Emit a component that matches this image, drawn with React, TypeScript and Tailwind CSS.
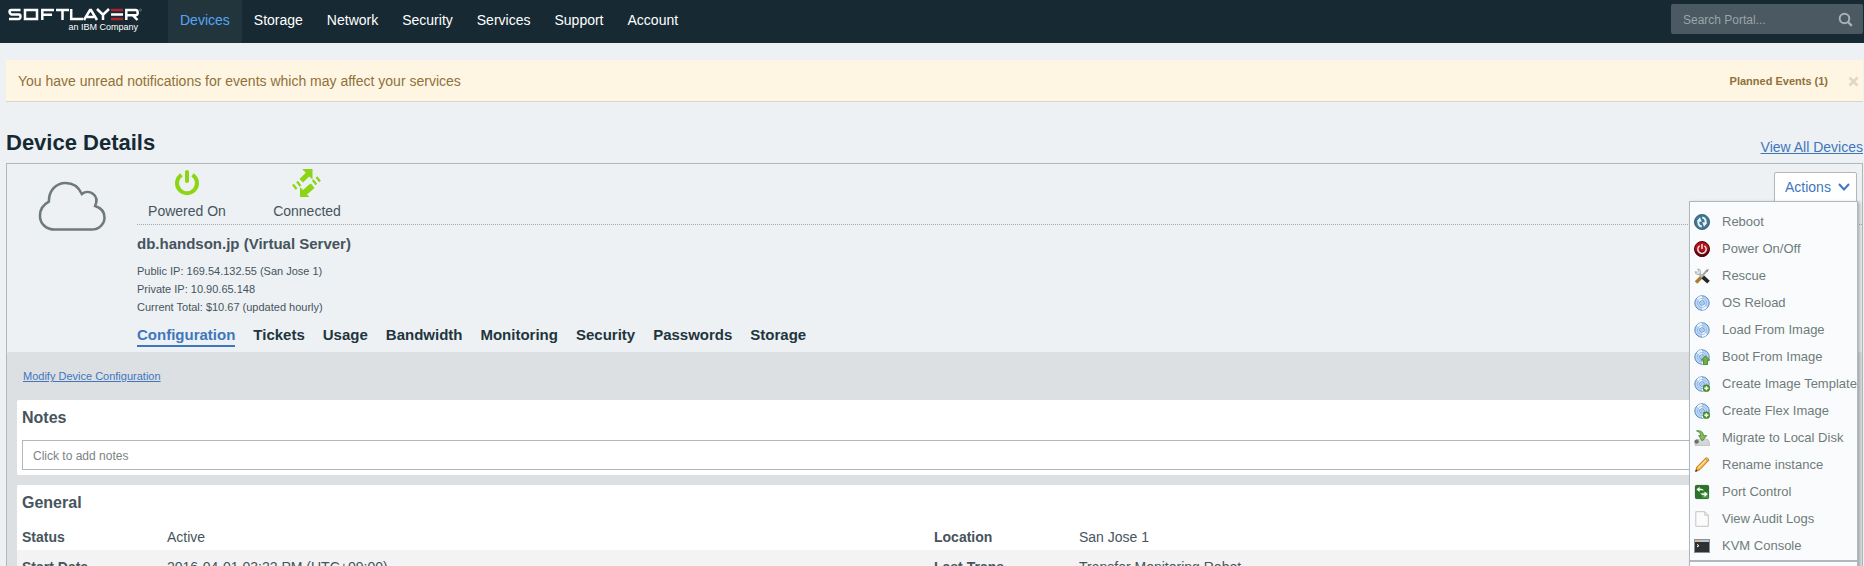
import React from "react";

const disc = (
  <>
    <circle cx="8" cy="8" r="7.2" fill="#b9d6f7" stroke="#5a88bd" />
    <path d="M8 8 2.600 3.400A7 7 0 0 1 8 1z M8 8l5.400 4.600A7 7 0 0 1 8 15z" fill="#eef6ff" />
    <circle cx="8" cy="8" r="4.600" fill="none" stroke="#8db4e2" strokeWidth=".7" />
    <circle cx="8" cy="8" r="2.200" fill="#fff" stroke="#5a8fd0" />
    <circle cx="8" cy="8" r=".8" fill="#4d7fc0" />
  </>
);
const plus = (
  <>
    <circle cx="12.400" cy="12.200" r="3.400" fill="#4e9a2e" stroke="#2f6e18" strokeWidth=".6" />
    <path d="M12.400 10.200v4M10.400 12.200h4" stroke="#fff" strokeWidth="1.400" />
  </>
);

const actions: { label: string; icon: React.ReactNode }[] = [
  {
    label: "Reboot",
    icon: (
      <>
        <circle cx="8" cy="8" r="7.600" fill="#3f7493" stroke="#2b566f" strokeWidth=".8" />
        <path d="M7.800 12.400C4.400 12 3.600 8.600 5 6.400M8.200 3.600c3.400.4 4.200 3.800 2.800 6" fill="none" stroke="#e8f2f7" strokeWidth="2" />
        <path d="M2.600 7.200 6 3.200l1.800 4.600zM13.400 8.800 10 12.800 8.200 8.200z" fill="#e8f2f7" />
      </>
    ),
  },
  {
    label: "Power On/Off",
    icon: (
      <>
        <circle cx="8" cy="8" r="7.500" fill="#b3111c" stroke="#4b0509" />
        <path d="M1 9a7 7 0 0 0 14 0q-7 3-14 0z" fill="#5d060b" />
        <path d="M5.600 4.800a4.200 4.200 0 1 0 4.800 0M8 3v5" fill="none" stroke="#f6dfe0" strokeWidth="1.500" />
      </>
    ),
  },
  {
    label: "Rescue",
    icon: (
      <>
        <path d="m2 14.500 6-6" stroke="#a87b25" strokeWidth="3.400" />
        <path d="m8 8 5-5.500" stroke="#a3a8ab" strokeWidth="2" />
        <path d="m15 .8-3.600 1.400 2 2z" fill="#8c9195" />
        <path d="m4.500 5 4 4" stroke="#b2b7ba" strokeWidth="2.600" />
        <path d="M1.200 3.500a2.800 2.800 0 1 0 2.300-2.500l1.200 1.900L3.300 4.300z" fill="#e2e5e7" stroke="#9a9fa2" strokeWidth=".7" />
        <path d="m8.800 9 5.700 5.200" stroke="#262626" strokeWidth="3.800" />
      </>
    ),
  },
  { label: "OS Reload", icon: disc },
  { label: "Load From Image", icon: disc },
  {
    label: "Boot From Image",
    icon: (
      <>
        {disc}
        <path d="m11.500 6.800 4.300 4.400h-2.200v4.300H9.500v-4.300H7.200z" fill="#6fb04c" stroke="#3f7d23" strokeWidth=".8" />
      </>
    ),
  },
  { label: "Create Image Template", icon: <>{disc}{plus}</> },
  { label: "Create Flex Image", icon: <>{disc}{plus}</> },
  {
    label: "Migrate to Local Disk",
    icon: (
      <>
        <path d="m2.500 9.500 11-.5 2.300 3.500v3H1v-3z" fill="#d3d5d6" stroke="#b0b3b5" strokeWidth=".6" />
        <circle cx="2.600" cy="11.600" r="2.200" fill="#6b7074" />
        <path d="M2.500.8c4-.6 6.800 1 7 4.800h3.200L8.300 11 4.600 5.600h2.200c0-2-1.600-3.600-4.300-4.800z" fill="#86bb5c" stroke="#477f2a" strokeWidth=".8" />
      </>
    ),
  },
  {
    label: "Rename instance",
    icon: (
      <>
        <path d="m1.500 14.500 1.300-4.500L11.500 1.300q1.800-.8 3.200 2L6 12.600z" fill="#f5b740" stroke="#b56e14" strokeWidth=".9" />
        <path d="m4.500 10.800 7.500-7.700" stroke="#fde7a4" strokeWidth="1.200" />
        <path d="m11.200 1.600 1.200-.9q2.400.2 2.500 2.600l-1 1z" fill="#eeb3a0" stroke="#b56e14" strokeWidth=".6" />
        <path d="m1.300 14.800.8-2.600 1.600 1.800z" fill="#493318" />
      </>
    ),
  },
  {
    label: "Port Control",
    icon: (
      <>
        <rect x="1.400" y="1.400" width="13.200" height="13.200" rx="1" fill="#287527" stroke="#174f18" strokeWidth=".8" />
        <path d="M8 8h6v6H8z" fill="#4a9b3c" />
        <path d="M2.400 5.400 5.600 2.700v1.800q3.400 0 4.400 2-2-.6-4.400-.2v1.800zM13.700 10.300 10.500 13v-1.800q-3.400 0-4.500-2 2.100.6 4.500.2V7.600z" fill="#fff" />
      </>
    ),
  },
  {
    label: "View Audit Logs",
    icon: <path d="M1.800.7h9l3.500 3.500v11.100H1.800zM10.800.7v3.500h3.500" fill="#fbfbfb" stroke="#c4c4c4" />,
  },
  {
    label: "KVM Console",
    icon: (
      <>
        <rect x=".5" y="1.500" width="15" height="13" fill="#2e3134" stroke="#8c9093" />
        <path d="M1 2h14v2H1z" fill="#b7c6d6" />
        <path d="M2 2.500h4v1H2z" fill="#efb43c" />
        <path d="m3 6.500 2 1.200-2 1.200" fill="none" stroke="#fff" />
      </>
    ),
  },
];

const nav = ["Devices", "Storage", "Network", "Security", "Services", "Support", "Account"];
const tabs = ["Configuration", "Tickets", "Usage", "Bandwidth", "Monitoring", "Security", "Passwords", "Storage"];
const rows = [
  ["Status", "Active", "Location", "San Jose 1"],
  ["Start Date", "2016-04-01 03:22 PM (UTC+09:00)", "Last Trans", "Transfer Monitoring Robot"],
];

function Logo() {
  return (
    <svg className="h-[13px] w-[134px]" viewBox="0 0 134 13" role="img" aria-label="SoftLayer" fill="none" stroke="#fff" strokeWidth="2.500">
      <path d="M12.500 2H3.200Q1.500 2 1.500 3.800T3.200 6.400H11Q12.500 6.400 12.500 8.500T11 11H1M17 2h12v9H17zM34.300 12V2H46M34.300 6.800H44M48 2h13M54.500 2v10M63.200 1v10H75M76 12l6-10h1l6 10M79 9h7M89 1l6 5.700L101 1M95 6.500V12" />
      <path d="M103 2h12M103 11h12" stroke="#b0232a" />
      <path d="M103 6.500h12" />
      <path d="M118.300 12V2h9.200q2.200 0 2.200 2.700t-2.200 2.600h-9M125 7.300l4.500 4.700" />
      <circle cx="132.500" cy="2" r="1" stroke="#87939a" strokeWidth=".6" />
    </svg>
  );
}

function Header() {
  return (
    <header className="flex h-[43px] justify-between bg-[#172a34] pr-px">
      <div className="flex">
        <a href="#home" className="flex w-[168px] flex-col gap-px pl-2 pt-2 text-white">
          <Logo />
          <span className="w-[130px] text-right text-[9px] leading-[10px]">an IBM Company</span>
        </a>
        <nav className="flex text-sm leading-10 text-white">
          {nav.map((n, i) => (
            <a key={n} href={`#${n}`} className={i === 0 ? "bg-[#22353d] px-3 text-[#56a5f5]" : "px-3"}>
              {n}
            </a>
          ))}
        </nav>
      </div>
      <form className="mt-1 flex h-[30px] w-48 items-center rounded-xs bg-[#4a5962] pr-2.5 pl-3">
        <input aria-label="Search Portal" placeholder="Search Portal..." className="min-w-0 grow pt-0.5 text-xs text-white outline-none placeholder:text-[#9ba4a9]" />
        <button type="button" aria-label="Search">
          <svg className="size-[15px]" viewBox="0 0 15 15" fill="none" stroke="#a9b1b5" strokeWidth="2">
            <circle cx="6.500" cy="6.500" r="4.800" />
            <path d="m10 10 3.800 3.800" strokeWidth="2.400" />
          </svg>
        </button>
      </form>
    </header>
  );
}

function ActionsMenu() {
  return (
    <div className="absolute top-2 right-[5px]">
      <button type="button" className="flex h-[30px] w-[83px] items-center justify-between rounded-t-xs border border-[#b1b8bd] bg-white pr-1.5 pl-2.5 text-sm text-[#3f76bd]">
        Actions
        <svg className="h-2 w-3" viewBox="0 0 12 8" fill="none" stroke="#3f76bd" strokeWidth="2">
          <path d="m1 1 5 5.500L11 1" />
        </svg>
      </button>
      <ul className="absolute top-[29px] -right-px w-[169px] border border-[#b1b8bd] bg-[#fafbfc] pt-1.5 shadow-[2px_1px_3px_rgba(0,0,0,0.25)]">
        {actions.map((a) => (
          <li key={a.label}>
            <button type="button" className="flex h-[27px] w-full items-center gap-3 pl-1 text-left text-[13px] whitespace-nowrap text-[#6f7b7b]">
              <svg className="size-4 shrink-0" viewBox="0 0 16 16" fill="none">
                {a.icon}
              </svg>
              <span className="pt-0.5">{a.label}</span>
            </button>
          </li>
        ))}
        <li className="mt-px h-4 border-t-2 border-[#b1b8bd]" />
      </ul>
    </div>
  );
}

export default function App() {
  return (
    <div className="h-screen overflow-hidden bg-[#edf1f4] font-['Liberation_Sans',Arial,sans-serif] text-sm text-[#46545d]">
      <Header />
      <main className="mt-[17px] mr-px ml-1.5">
        <div role="status" className="flex h-[42px] items-center justify-between border-b border-[#d5d8cf] bg-[#fef6e2] pt-px pl-3 text-[#8f713b]">
          <p>You have unread notifications for events which may affect your services</p>
          <div className="flex items-center gap-5 pt-px pr-1">
            <a href="#events" className="text-[11px] font-bold">Planned Events (1)</a>
            <button type="button" aria-label="Dismiss">
              <svg className="size-[11px]" viewBox="0 0 11 11" stroke="#e3d8bf" strokeWidth="2.600">
                <path d="m1.500 1.500 8 8M9.500 1.500l-8 8" />
              </svg>
            </button>
          </div>
        </div>
        <div className="flex h-[61px] items-end justify-between">
          <h1 className="pb-1.5 text-[22px] leading-7 font-bold text-[#172a34]">Device Details</h1>
          <a href="#devices" className="pb-1.5 text-[#3f76bd] underline">View All Devices</a>
        </div>

        <section className="relative border border-[#b1b8bd]">
          <div className="flex h-[188px]">
            <div className="w-[130px] shrink-0 pt-4 pl-[31px]">
              <svg className="h-[52px] w-[68px]" viewBox="0 0 69 54" preserveAspectRatio="none" fill="none" stroke="#6f7b7b" strokeWidth="2.600">
                <path d="M17 51.500C8 51.500 2 45 2 37q0-9.500 9-14.500C11 11 18 3 28 3q11.500 0 16.500 11.500c7-5.500 18.500 1 13.500 12.500C64 29 67.500 33.500 67.500 39c0 7-6 12.500-13 12.500z" />
              </svg>
            </div>
            <div className="flex grow flex-col">
              <div className="flex h-[61px] border-b border-dotted border-[#a3abb0] pt-1">
                <div className="flex w-[100px] flex-col items-center gap-[3px]">
                  <svg className="size-[30px]" viewBox="0 0 30 30" fill="none" stroke="#8bd512" strokeWidth="4">
                    <path d="M9.500 6.800a10 10 0 1 0 11 0" />
                    <path d="M15 4v9" strokeLinecap="round" />
                  </svg>
                  <span>Powered On</span>
                </div>
                <div className="flex w-[140px] flex-col items-center gap-[3px]">
                  <svg className="size-[30px]" viewBox="0 0 30 30" fill="#8bd512">
                    <path d="M10 1h10.500v10.500l-3.300-3-6.200 6L7.500 11l6.300-6.200z" />
                    <path d="M8 29V19l3 3 5.500-5 2.500-1.500 3.500 4.500-7.500 6.500 2.500 2.500z" />
                    <path d="m1 16.500 3.500 4.500M5 13.500l3.500 4.500M20.800 12l3.500 4.500M24.500 9l3.500 4.500" stroke="#8bd512" strokeWidth="2.200" />
                  </svg>
                  <span>Connected</span>
                </div>
              </div>
              <h2 className="pt-[9px] text-[15px] leading-5 font-bold">db.handson.jp (Virtual Server)</h2>
              <div className="pt-2 text-[11px] leading-[18px]">
                <p>Public IP: 169.54.132.55 (San Jose 1)</p>
                <p>Private IP: 10.90.65.148</p>
                <p>Current Total: $10.67 (updated hourly)</p>
              </div>
              <nav className="flex gap-[18px] pt-[9px] text-[15px] leading-5 font-bold text-[#22353d]">
                {tabs.map((t, i) => (
                  <a key={t} href={`#tab-${t}`} className={i === 0 ? "border-b-2 border-[#3f76bd] text-[#3f76bd]" : ""}>
                    {t}
                  </a>
                ))}
              </nav>
            </div>
          </div>

          <div className="flex flex-col rounded-t-xs bg-[#dce0e3] pr-4 pl-2.5">
            <div className="flex h-12 items-center pl-1.5">
              <a href="#modify" className="text-[11px] leading-4 text-[#3f76bd] underline">Modify Device Configuration</a>
            </div>
            <section className="h-[75px] rounded-xs bg-white px-[5px] pt-2">
              <h3 className="h-8 text-[16px] leading-5 font-bold">
                <label htmlFor="notes">Notes</label>
              </h3>
              <input id="notes" placeholder="Click to add notes" className="h-[30px] w-full border border-[#b1b8bd] px-2.5 pt-0.5 text-xs placeholder:text-[#7b8386]" />
            </section>
            <section className="mt-2.5 rounded-t-xs bg-white pt-2">
              <h3 className="h-[27px] pl-[5px] text-[16px] leading-5 font-bold">General</h3>
              <table className="w-full table-fixed text-left">
                <colgroup>
                  <col className="w-[150px]" />
                  <col />
                  <col className="w-[145px]" />
                  <col />
                </colgroup>
                <tbody>
                  {rows.map((r) => (
                    <tr key={r[0]} className="h-[30px] even:bg-[#f3f3f3]">
                      <th scope="row" className="pt-1 pl-[5px]">{r[0]}</th>
                      <td className="pt-1">{r[1]}</td>
                      <th scope="row" className="pt-1">{r[2]}</th>
                      <td className="pt-1">{r[3]}</td>
                    </tr>
                  ))}
                </tbody>
              </table>
            </section>
          </div>
          <ActionsMenu />
        </section>
      </main>
    </div>
  );
}
